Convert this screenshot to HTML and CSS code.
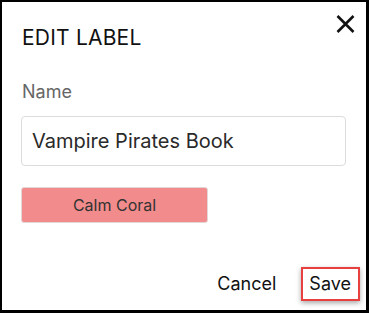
FILE: index.html
```html
<!DOCTYPE html>
<html lang="en">
<head>
<meta charset="utf-8">
<title>Edit label</title>
<link rel="stylesheet" href="styles.css">
</head>
<body>
<div class="dialog">
  <button class="close" aria-label="Close">
    <svg width="21" height="20" viewBox="0 0 21 20"><path d="M2.5 2 L18.5 18 M18.5 2 L2.5 18" stroke="#111" stroke-width="2.6" stroke-linecap="butt" fill="none"/></svg>
  </button>
  <h1 class="title">EDIT LABEL</h1>
  <label class="field-label" for="name">Name</label>
  <input id="name" class="field-input" type="text" value="Vampire Pirates Book">
  <button class="color-btn">Calm Coral</button>
  <div class="footer">
    <button class="btn">Cancel</button>
    <button class="btn btn-save">Save</button>
  </div>
</div>
</body>
</html>
```

FILE: styles.css
```css
* { box-sizing: border-box; }
html, body { margin: 0; padding: 0; background: #fff; }
body { font-family: Inter, "Noto Sans", sans-serif; }
.dialog {
  position: relative;
  width: 369px;
  height: 313px;
  border-style: solid;
  border-color: #000;
  border-width: 2px 3px 3px 2px;
  display: flex;
  flex-direction: column;
  align-items: flex-start;
  padding: 23px 6px 9px 19px;
}
.close {
  position: absolute;
  top: 12px;
  right: 10px;
  width: 21px;
  height: 20px;
  padding: 0;
  border: 0;
  background: none;
  display: block;
}
.close svg { display: block; }
.title {
  margin: 0 0 0 1px;
  font-size: 21px;
  font-weight: 400;
  color: #111;
  line-height: 25px;
  letter-spacing: 0.2px;
}
.field-label {
  margin: 31px 0 0 1px;
  font-size: 18px;
  line-height: 22px;
  color: #666;
}
.field-input {
  margin-top: 13px;
  width: 325px;
  height: 50px;
  border: 1px solid #dcdcdc;
  border-radius: 4px;
  padding: 0 10px;
  font-family: Inter, "Noto Sans", sans-serif;
  font-size: 20px;
  color: #2a2a2a;
  outline: none;
}
.color-btn {
  margin-top: 21px;
  width: 187px;
  height: 36px;
  background: #f28b8b;
  border: 1px solid #e2d6d6;
  border-radius: 3px;
  font-family: Inter, "Noto Sans", sans-serif;
  font-size: 16px;
  color: #333;
  padding: 0;
}
.footer {
  margin-top: auto;
  align-self: stretch;
  display: flex;
  justify-content: flex-end;
  align-items: center;
  gap: 17px;
}
.btn {
  font-family: Inter, "Noto Sans", sans-serif;
  font-size: 18px;
  line-height: 22px;
  color: #111;
  background: none;
  border: 2px solid transparent;
  padding: 4px 6px;
}
.btn-save {
  padding: 4px 7px 4px 6px;
  border-color: #e8403f;
  box-shadow: 0 2px 5px rgba(0,0,0,0.35);
}
```
